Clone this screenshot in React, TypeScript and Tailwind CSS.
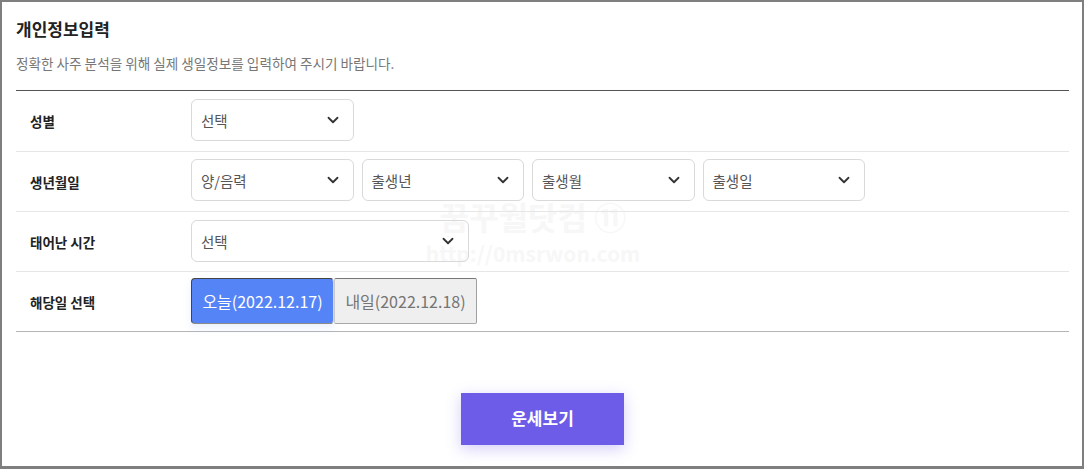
import { ChevronDown } from 'lucide-react';

const FONT = { fontFamily: '"Noto Sans CJK KR", "Noto Sans", sans-serif' };

function Select({ label, wide }: { label: string; wide?: boolean }) {
  return (
    <div
      className={`flex h-[42px] items-center justify-between rounded-[6px] border border-[#d9d9d9] pl-[9px] pr-[11px] text-[14.5px] text-[#555] ${
        wide ? 'w-[278px]' : 'w-[162.5px]'
      }`}
    >
      <span className="pt-[1px]">{label}</span>
      <ChevronDown size={18} strokeWidth={2.4} className="text-[#333]" />
    </div>
  );
}

function Row({
  label,
  children,
  rowClass,
  controlsClass,
}: {
  label: string;
  children: React.ReactNode;
  rowClass: string;
  controlsClass: string;
}) {
  return (
    <div className={`flex items-center border-b ${rowClass}`}>
      <div className="w-[175px] pl-[14px] pt-[1px] text-[13.5px] font-bold text-[#222]">{label}</div>
      <div className={`flex gap-[8px] ${controlsClass}`}>{children}</div>
    </div>
  );
}

export default function App() {
  return (
    <div
      className="relative h-[469px] w-[1084px] overflow-hidden border-2 border-b-[3px] border-[#7f7f7f] bg-white"
      style={FONT}
    >
      {/* watermark */}
      <div className="pointer-events-none absolute left-[421px] top-[198px] w-[220px] text-center font-bold leading-none text-[#f7f7f7]">
        <div className="h-[32px] whitespace-nowrap text-[32px]">꿈꾸월닷컴 ⑪</div>
        <div className="mt-[11px] whitespace-nowrap text-[21px]">http://0msrwon.com</div>
      </div>

      <div className="relative pl-[14px] pr-[13px]">
        <h2 className="pt-[15px] text-[17px] font-bold leading-[24px] text-[#222]">개인정보입력</h2>
        <p className="mt-[12px] h-[38px] border-b border-[#555] text-[13.6px] leading-[20px] text-[#777]">
          정확한 사주 분석을 위해 실제 생일정보를 입력하여 주시기 바랍니다.
        </p>

        <Row label="성별" rowClass="h-[61px] border-[#e6e6e6]" controlsClass="mb-[2px]">
          <Select label="선택" />
        </Row>
        <Row label="생년월일" rowClass="h-[60px] border-[#e6e6e6]" controlsClass="mb-[3px]">
          <Select label="양/음력" />
          <Select label="출생년" />
          <Select label="출생월" />
          <Select label="출생일" />
        </Row>
        <Row label="태어난 시간" rowClass="h-[60px] border-[#e6e6e6]" controlsClass="mb-[1px]">
          <Select label="선택" wide />
        </Row>
        <Row label="해당일 선택" rowClass="h-[60px] border-[#b5b5b5]" controlsClass="mb-[1px]">
          <div className="flex">
            <div className="flex h-[46px] w-[143px] items-center justify-center rounded-[4px] border border-[#444] border-b-[#8a8a8a] border-r-[#d8d8d8] bg-[#5584f7] text-[16px] text-white shadow-[0_4px_8px_rgba(85,132,247,0.12)]">
              오늘(2022.12.17)
            </div>
            <div className="flex h-[46px] w-[143px] items-center justify-center rounded-[2px] border border-[#767676] border-b-[#a8a8a8] border-l-[#c8c8c8] border-r-[#a0a0a0] bg-[#efefef] text-[16px] text-[#757575]">
              내일(2022.12.18)
            </div>
          </div>
        </Row>

        <div className="mt-[61px] flex justify-center">
          <button className="h-[52px] w-[163px] bg-[#6c5ce7] pb-[2px] text-[17px] font-bold text-white shadow-[0_4px_14px_rgba(108,92,231,0.3)]">
            운세보기
          </button>
        </div>
      </div>
    </div>
  );
}
